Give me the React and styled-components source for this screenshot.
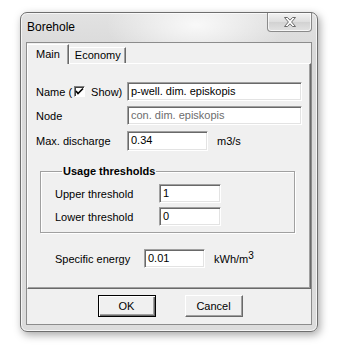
import React from "react";
import styled, { createGlobalStyle } from "styled-components";

const GlobalStyle = createGlobalStyle`
  html, body {
    margin: 0;
    padding: 0;
    background: #ffffff;
  }
  body {
    font-family: "Liberation Sans", Arial, sans-serif;
    font-size: 11px;
    color: #000;
  }
`;

const Page = styled.div`
  width: 343px;
  height: 350px;
  padding: 12px 0 0 20px;
  box-sizing: border-box;
`;

const Window = styled.div`
  width: 298px;
  height: 320px;
  box-sizing: border-box;
  border: 1px solid #6e6e6e;
  border-radius: 7px;
  display: flex;
  flex-direction: column;
  background:
    radial-gradient(ellipse 90px 40px at 175px 12px, rgba(255, 255, 255, 0.8), rgba(255, 255, 255, 0)),
    linear-gradient(to bottom, #e2e2e2, #d9d9d9 40px, #dcdcdc);
  box-shadow: 2px 3px 8px rgba(0, 0, 0, 0.35), inset 0 0 0 1px rgba(255, 255, 255, 0.7);
`;

const TitleBar = styled.div`
  height: 29px;
  display: flex;
  align-items: flex-start;
  justify-content: space-between;
  padding-left: 6px;
`;

const Title = styled.span`
  font-size: 12px;
  line-height: 12px;
  margin-top: 8px;
`;

const CloseButton = styled.div`
  width: 45px;
  height: 19px;
  margin-right: 5px;
  box-sizing: border-box;
  border: 1px solid #8a8a8a;
  border-top: none;
  border-radius: 0 0 4px 4px;
  background: linear-gradient(to bottom, #f2f2f2, #dedede 50%, #d2d2d2 51%, #e2e2e2);
  box-shadow: inset 0 0 0 1px rgba(255, 255, 255, 0.7);
  display: flex;
  align-items: center;
  justify-content: center;
`;

const Client = styled.div`
  flex: 1;
  margin: 0 5px 6px 5px;
  border: 1px solid #8c8c8c;
  background: #f0f0f0;
  display: flex;
  flex-direction: column;
`;

const TabStrip = styled.div`
  display: flex;
  align-items: flex-end;
  height: 20px;
`;

const Tab = styled.div`
  box-sizing: border-box;
  height: ${(p) => (p.$active ? "20px" : "16px")};
  padding: ${(p) => (p.$active ? "3px 8px 0 8px" : "1px 4px 0 5px")};
  border-left: 1px solid #ffffff;
  border-top: 1px solid #ffffff;
  border-right: 1px solid #696969;
  box-shadow: inset -1px 0 0 #a0a0a0;
  background: #f0f0f0;
  position: relative;
  z-index: ${(p) => (p.$active ? 2 : 1)};
  margin-bottom: ${(p) => (p.$active ? "-1px" : "0")};
  line-height: 13px;
`;

const Panel = styled.div`
  height: 226px;
  box-sizing: border-box;
  border-top: 1px solid #ffffff;
  border-left: 1px solid #ffffff;
  border-right: 1px solid #696969;
  border-bottom: 1px solid #696969;
  box-shadow: inset -1px -1px 0 #a0a0a0;
  display: flex;
  flex-direction: column;
  padding: 18px 0 0 8px;
`;

const Row = styled.div`
  display: flex;
  align-items: center;
  height: 19px;
  margin-bottom: ${(p) => p.$gap ?? 5}px;
  padding-left: ${(p) => p.$indent || 0}px;
`;

const Label = styled.span`
  width: ${(p) => p.$w}px;
  flex-shrink: 0;
  display: flex;
  align-items: center;
  white-space: nowrap;
`;

const Input = styled.div`
  width: ${(p) => p.$w}px;
  height: ${(p) => p.$h || 19}px;
  box-sizing: border-box;
  border-top: 1px solid #a0a0a0;
  border-left: 1px solid #a0a0a0;
  border-right: 1px solid #ffffff;
  border-bottom: 1px solid #ffffff;
  box-shadow: inset 1px 1px 0 #696969, inset -1px -1px 0 #e3e3e3;
  background: #ffffff;
  color: ${(p) => (p.$disabled ? "#6d6d6d" : "#000")};
  padding: 2px 0 0 3px;
  line-height: 13px;
  white-space: nowrap;
`;

const Unit = styled.span`
  margin-left: 9px;
`;

const Sup = styled.sup`
  font-size: 10px;
  vertical-align: 4px;
  line-height: 0;
`;

const Check = styled.span`
  width: 11px;
  height: 11px;
  box-sizing: border-box;
  margin: 0 6px 0 2px;
  border-top: 1px solid #808080;
  border-left: 1px solid #808080;
  border-right: 1px solid #ffffff;
  border-bottom: 1px solid #ffffff;
  box-shadow: inset 1px 1px 0 #404040;
  background: #ffffff;
  display: flex;
  align-items: center;
  justify-content: center;
`;

const GroupBox = styled.fieldset`
  width: 255px;
  height: 68px;
  box-sizing: border-box;
  margin: 15px 0 0 4px;
  padding: 7px 0 0 14px;
  border: 1px solid #a0a0a0;
  box-shadow: 1px 1px 0 #ffffff, inset 1px 1px 0 #ffffff;
  display: flex;
  flex-direction: column;
`;

const Legend = styled.legend`
  font-weight: bold;
  font-size: 11px;
  padding: 0 1px;
  margin-left: 7px;
  line-height: 12px;
`;

const EnergyRow = styled(Row)`
  margin-top: 16px;
`;

const ButtonRow = styled.div`
  flex: 1;
  display: flex;
  justify-content: center;
  align-items: flex-start;
  gap: 29px;
  padding-top: 6px;
  padding-left: 2px;
`;

const Button = styled.div`
  width: 58px;
  height: 22px;
  box-sizing: border-box;
  display: flex;
  align-items: center;
  justify-content: center;
  background: #f0f0f0;
  border-top: 1px solid ${(p) => (p.$default ? "#000" : "#ffffff")};
  border-left: 1px solid ${(p) => (p.$default ? "#000" : "#ffffff")};
  border-right: 1px solid ${(p) => (p.$default ? "#000" : "#696969")};
  border-bottom: 1px solid ${(p) => (p.$default ? "#000" : "#696969")};
  box-shadow: ${(p) =>
    p.$default
      ? "inset 1px 1px 0 #ffffff, inset -1px -1px 0 #696969, inset -2px -2px 0 #a0a0a0"
      : "inset -1px -1px 0 #a0a0a0"};
`;

function CloseIcon() {
  return (
    <svg width="14" height="12" viewBox="0 0 14 12">
      <path
        d="M1.5 1.5 H4.5 L7 4.2 L9.5 1.5 H12.5 L8.6 6 L12.5 10.5 H9.5 L7 7.8 L4.5 10.5 H1.5 L5.4 6 Z"
        fill="#ffffff"
        stroke="#6a6a6a"
        strokeWidth="1"
        strokeLinejoin="round"
      />
    </svg>
  );
}

function CheckMark() {
  return (
    <svg width="9" height="9" viewBox="0 0 9 9">
      <path d="M1 4 L3 6.5 L8 1.5" fill="none" stroke="#000" strokeWidth="1.6" />
    </svg>
  );
}

export default function App() {
  return (
    <Page>
      <GlobalStyle />
      <Window>
        <TitleBar>
          <Title>Borehole</Title>
          <CloseButton>
            <CloseIcon />
          </CloseButton>
        </TitleBar>
        <Client>
          <TabStrip>
            <Tab $active>Main</Tab>
            <Tab>Economy</Tab>
          </TabStrip>
          <Panel>
            <Row>
              <Label $w={91}>
                Name (<Check><CheckMark /></Check>Show)
              </Label>
              <Input $w={175}>p-well. dim. episkopis</Input>
            </Row>
            <Row $gap={6}>
              <Label $w={91}>Node</Label>
              <Input $w={175} $disabled>con. dim. episkopis</Input>
            </Row>
            <Row $gap={0}>
              <Label $w={91}>Max. discharge</Label>
              <Input $w={81} $h={20}>0.34</Input>
              <Unit>m3/s</Unit>
            </Row>
            <GroupBox>
              <Legend>Usage thresholds</Legend>
              <Row $gap={4}>
                <Label $w={104}>Upper threshold</Label>
                <Input $w={62}>1</Input>
              </Row>
              <Row $gap={0}>
                <Label $w={104}>Lower threshold</Label>
                <Input $w={62}>0</Input>
              </Row>
            </GroupBox>
            <EnergyRow $indent={19}>
              <Label $w={89}>Specific energy</Label>
              <Input $w={61}>0.01</Input>
              <Unit>
                kWh/m<Sup>3</Sup>
              </Unit>
            </EnergyRow>
          </Panel>
          <ButtonRow>
            <Button $default>OK</Button>
            <Button>Cancel</Button>
          </ButtonRow>
        </Client>
      </Window>
    </Page>
  );
}
